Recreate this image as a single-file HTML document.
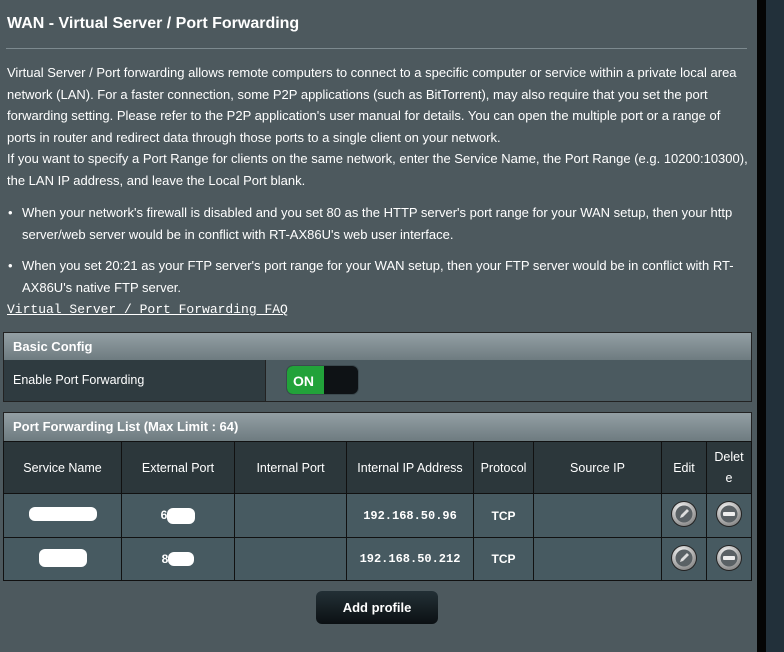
<!DOCTYPE html>
<html><head><meta charset="utf-8">
<style>
*{margin:0;padding:0;box-sizing:border-box}
body{width:784px;height:652px;overflow:hidden;background:#4d595e;font-family:"Liberation Sans",Arial,sans-serif;color:#fff;position:relative}
.strip1{position:absolute;left:757px;top:0;width:9px;height:652px;background:#050505}
.strip2{position:absolute;left:766px;top:0;width:18px;height:652px;background:#22303a}
.t{position:absolute;left:7px;top:15px;font-size:16px;font-weight:bold}
.hr{position:absolute;left:6px;top:48px;width:741px;height:1px;background:#7d8a8f}
.p{position:absolute;left:7px;font-size:13px;line-height:21.6px;color:#fff;width:745px}
.faq{position:absolute;left:7px;top:302px;font-family:"Liberation Mono",monospace;font-size:13px;text-decoration:underline}
.box{position:absolute;left:3px;width:749px;border:1px solid #222}
.hd{height:27px;background:linear-gradient(#939fa4,#6e7b80);font-size:13px;font-weight:bold;padding:6px 9px}
table{border-collapse:collapse;position:absolute;left:3px;font-size:12.5px}
td{border:1px solid #111;text-align:center}
.ip{font-family:"Liberation Mono",monospace;font-size:12px;font-weight:bold}
.bt{font-size:12px;font-weight:bold}
.w{background:#fff;display:inline-block;border-radius:6px}
</style></head><body>
<div class="strip1"></div><div class="strip2"></div>
<div class="t">WAN - Virtual Server / Port Forwarding</div>
<div class="hr"></div>
<div class="p" style="top:62px">Virtual Server / Port forwarding allows remote computers to connect to a specific computer or service within a private local area network (LAN). For a faster connection, some P2P applications (such as BitTorrent), may also require that you set the port forwarding setting. Please refer to the P2P application's user manual for details. You can open the multiple port or a range of ports in router and redirect data through those ports to a single client on your network.<br>If you want to specify a Port Range for clients on the same network, enter the Service Name, the Port Range (e.g. 10200:10300), the LAN IP address, and leave the Local Port blank.</div>
<div class="p" style="top:202px;left:8px">•</div>
<div class="p" style="top:202px;left:22px;width:725px">When your network's firewall is disabled and you set 80 as the HTTP server's port range for your WAN setup, then your http server/web server would be in conflict with RT-AX86U's web user interface.</div>
<div class="p" style="top:255px;left:8px">•</div>
<div class="p" style="top:255px;left:22px;width:725px">When you set 20:21 as your FTP server's port range for your WAN setup, then your FTP server would be in conflict with RT-AX86U's native FTP server.</div>
<div class="faq">Virtual Server / Port Forwarding FAQ</div>

<div class="box" style="top:332px;height:70px">
<div class="hd">Basic Config</div>
<div style="display:flex;height:41px;font-size:12.5px">
<div style="width:262px;background:#2f3b40;padding:13px 9px;border-right:1px solid #222">Enable Port Forwarding</div>
<div style="flex:1;background:#4b5a60;position:relative">
<div style="position:absolute;left:20px;top:5px;width:73px;height:30px;border-radius:7px;background:#0e1215;border:1px solid #3c4a4f;overflow:hidden">
<div style="width:37px;height:100%;background:#22a23a;font-size:14px;font-weight:bold;padding:7px 6px">ON</div></div>
</div></div></div>

<div class="box" style="top:412px;height:29px"><div class="hd" style="height:28px">Port Forwarding List (Max Limit : 64)</div></div>
<table style="top:441px;width:749px">
<tr style="height:52px;background:#2c373b">
<td style="width:118px">Service Name</td><td style="width:113px">External Port</td><td style="width:112px">Internal Port</td><td style="width:127px">Internal IP Address</td><td style="width:60px">Protocol</td><td style="width:128px">Source IP</td><td style="width:45px">Edit</td><td style="line-height:21px">Delet<br>e</td></tr>
<tr style="height:44px;background:#475a61">
<td><span class="w" style="width:68px;height:14px"></span></td><td class="bt">6<span class="w" style="width:28px;height:16px;vertical-align:middle"></span></td><td></td><td class="ip">192.168.50.96</td><td class="bt">TCP</td><td></td>
<td><svg width="28" height="28" viewBox="0 0 28 28"><defs><radialGradient id="g" cx="40%" cy="30%" r="70%"><stop offset="0" stop-color="#fff"/><stop offset="1" stop-color="#8a8a8a"/></radialGradient></defs><circle cx="14" cy="14" r="13" fill="#222"/><circle cx="14" cy="14" r="12" fill="url(#g)"/><circle cx="14" cy="14" r="8.5" fill="#5a6165"/><path d="M10 18 L11 15 L17 9 L19 11 L13 17 Z" fill="#ddd"/></svg></td>
<td><svg width="28" height="28" viewBox="0 0 28 28"><circle cx="14" cy="14" r="13" fill="#222"/><circle cx="14" cy="14" r="12" fill="url(#g)"/><circle cx="14" cy="14" r="8.5" fill="#5a6165"/><rect x="8" y="12" width="12" height="4" rx="1" fill="#eee"/></svg></td></tr>
<tr style="height:43px;background:#475a61">
<td><span class="w" style="width:48px;height:18px"></span></td><td class="bt">8<span class="w" style="width:26px;height:14px;vertical-align:middle"></span></td><td></td><td class="ip">192.168.50.212</td><td class="bt">TCP</td><td></td>
<td><svg width="28" height="28" viewBox="0 0 28 28"><circle cx="14" cy="14" r="13" fill="#222"/><circle cx="14" cy="14" r="12" fill="url(#g)"/><circle cx="14" cy="14" r="8.5" fill="#5a6165"/><path d="M10 18 L11 15 L17 9 L19 11 L13 17 Z" fill="#ddd"/></svg></td>
<td><svg width="28" height="28" viewBox="0 0 28 28"><circle cx="14" cy="14" r="13" fill="#222"/><circle cx="14" cy="14" r="12" fill="url(#g)"/><circle cx="14" cy="14" r="8.5" fill="#5a6165"/><rect x="8" y="12" width="12" height="4" rx="1" fill="#eee"/></svg></td></tr>
</table>
<div style="position:absolute;left:316px;top:591px;width:122px;height:33px;border-radius:6px;background:linear-gradient(#233036,#0b1013);font-size:13px;font-weight:bold;text-align:center;line-height:33px">Add profile</div>
</body></html>
